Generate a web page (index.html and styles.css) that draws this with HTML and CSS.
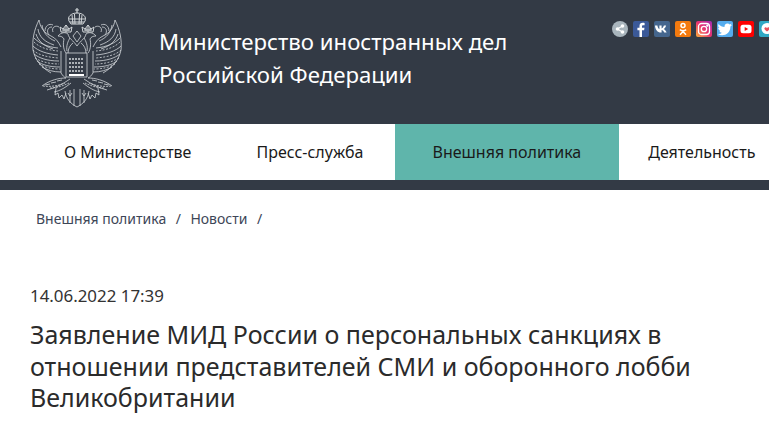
FILE: index.html
```html
<!DOCTYPE html>
<html lang="ru">
<head>
    <meta charset="UTF-8">
    <title>Заявление МИД России</title>
    <link rel="stylesheet" href="styles.css">
</head>
<body>

    <!-- Header -->
    <header class="header">
        <svg class="emblem" viewBox="0 0 104 110" fill="none" stroke="#d3d7da" stroke-width=".8">
            <defs>
                <g id="half">
                    <!-- wing -->
                    <path d="M14 15C9 25 7 35 8 45c2 10 8 17 18 23"/>
                    <path d="M14 15c1 7 5 13 12 16 5 2 8 7 10 11"/>
                    <path d="M17 20c1 8 6 13 13 16M13 24c1 8 7 13 16 16M11 29c2 7 8 12 17 15"/>
                    <path d="M9 33c5 5 13 9 24 10M8 41c5 5 14 8 25 9M9 49c5 4 13 7 25 7M12 56c5 4 13 6 23 6M17 62c5 3 11 5 19 5"/>
                    <path d="M9 37c5 5 13 8 24 9M8 45c5 5 14 7 25 8M10 53c5 3 13 6 24 6M14 59c5 3 12 5 21 5" stroke-dasharray="2 1.500"/>
                    <!-- head, neck, small crown -->
                    <path d="M52 41c-4-6-8-7-9-12-2-2-7-2-10 2 3 0 5 1 6 3-1 4-1 10 2 14"/>
                    <path d="M48 38c-3 2-5 6-5 10M45 33c-2 3-4 8-3 13M52 26l-4 5 4 6"/>
                    <path d="M36 27l-1-5 3 2 3-4 3 4 3-2-1 5zM37 25h8M41 20v7M39 23v3M43 23v3" stroke-width="1"/>
                    <path d="M28 27c-2-5 3-7 6-5M20 26c0-5 4-8 8-6M24 30c-3-4-1-8 3-8"/>
                    <!-- big crown -->
                    <path d="M52 8c-6 0-10 4-8 8l2 3h6M47 10l1 9M49.500 9l.5 10M44 14h8M45 17h7" stroke-width="1"/>
                    <!-- branches -->
                    <path d="M17 81c8-6 17-8 24-8M22 85c8-2 16-6 23-11M29 87c6-1 12-5 17-9M20 80l5-1M26 78l5-1M32 76l5-1"/>
                    <path d="M18 81c7 1 15 0 22-3M25 83c6 0 13-2 19-5" stroke-dasharray="2 1"/>
                    <!-- claws -->
                    <path d="M31 83l-1 7 3-2 1 5 3-3 2 4 2-6"/>
                    <!-- tail -->
                    <path d="M40 86c1 8 6 13 12 16M45 85v13M49 84v17M43 88l2 3 2-3"/>
                    <!-- shield feather edge -->
                    <path d="M36 46v22c2 3 3 4 5 5"/>
                </g>
            </defs>
            <use href="#half"/>
            <use href="#half" transform="translate(104 0) scale(-1 1)"/>
            <path d="M52 3v5M50 5h4" stroke-width="1.200"/>
            <path class="emblem-fill" d="M41 48h21v24H41z"/>
            <path d="M44 54h15M44 58h15M44 62h15M44 66h15" stroke-width="1.700" stroke-dasharray="2 1"/>
            <path d="M44 70h15" stroke="#fff" stroke-width="2"/>
        </svg>
        <div class="title">Министерство иностранных дел<br>Российской Федерации</div>
        <div class="socials">
            <span class="soc share">
                <svg viewBox="0 0 16 16" fill="#fff"><circle cx="5.500" cy="8" r="1.800"/><circle cx="10.500" cy="5" r="1.800"/><circle cx="10.500" cy="11" r="1.800"/><path d="M5 7.600l5.300-3 .5.800-5.300 3zM5.500 7.600l5.300 3-.5.800-5.300-3z"/></svg>
            </span>
            <span class="soc fb">
                <svg viewBox="0 0 16 16" fill="#fff"><path d="M9 16V9.200h2.100l.4-2.500H9V5.400c0-.8.300-1.200 1.200-1.200h1.400V2c-.5-.1-1.200-.2-2-.2C7.700 1.800 6.500 3 6.500 5v1.700H4.400v2.500h2.100V16z"/></svg>
            </span>
            <span class="soc vk">
                <svg viewBox="0 0 16 16" fill="#fff"><path d="M1 4.500h2.400c.1 1.700 1.300 3.600 2 3.700V4.500h2.200v2.900c.9-.1 1.800-1.500 2.300-2.900h2.200c-.4 1.700-1.500 3-2.300 3.600.8.500 2.100 1.700 2.800 3.500h-2.400c-.5-1.300-1.600-2.400-2.600-2.500v2.500h-.6C3.500 11.600 1.200 8.600 1 4.500z"/></svg>
            </span>
            <span class="soc ok">
                <svg viewBox="0 0 16 16" fill="none" stroke="#fff" stroke-width="1.500"><circle cx="8" cy="4.500" r="2"/><path d="M4.800 8.600c2 1.300 4.400 1.300 6.400 0M8 10v1M8 10.500l-3 3.200M8 10.500l3 3.200"/></svg>
            </span>
            <span class="soc ig">
                <svg viewBox="0 0 16 16" fill="none" stroke="#fff" stroke-width="1.300"><rect x="2.500" y="2.500" width="11" height="11" rx="3"/><circle cx="8" cy="8" r="2.700"/><circle cx="11.300" cy="4.700" r=".5" fill="#fff"/></svg>
            </span>
            <span class="soc tw">
                <svg viewBox="0 0 16 16" fill="#fff"><path d="M15 3.800c-.5.200-1.100.4-1.700.5.600-.4 1.100-1 1.300-1.700-.6.400-1.200.6-1.900.8a3 3 0 0 0-5.100 2.700C5.200 6 3 4.900 1.600 3.100c-.8 1.300-.4 3.100.9 4-.5 0-.9-.1-1.300-.4 0 1.500 1 2.700 2.400 3-.4.100-.9.100-1.300 0 .4 1.200 1.500 2 2.800 2.100-1.200 1-2.800 1.400-4.400 1.200 5.500 3.400 13-.2 12.700-7.600.7-.4 1.200-1 1.600-1.600z"/></svg>
            </span>
            <span class="soc yt">
                <svg viewBox="0 0 16 16"><rect x="2.500" y="3.800" width="11" height="8.400" rx="2.500" fill="#fff"/><path d="M6.700 6l3.500 2-3.500 2z" fill="#f00"/></svg>
            </span>
            <span class="soc ln">
                <svg viewBox="0 0 16 16"><circle cx="8" cy="7.500" r="5.500" fill="#fff"/><path d="M5.500 7c1-1.500 2-.5 2.500.3.500-.8 1.500-1.800 2.500-.3.500 1-1 2.500-2.500 3.500C6.500 9.500 5 8 5.500 7z" fill="#e8505b"/></svg>
            </span>
        </div>
    </header>

    <!-- Menu -->
    <nav class="menu">
        <a class="menu-item first">О Министерстве</a>
        <a class="menu-item">Пресс-служба</a>
        <a class="menu-item active">Внешняя политика</a>
        <a class="menu-item last">Деятельность</a>
    </nav>

    <!-- Breadcrumbs -->
    <div class="crumbs">
        <span>Внешняя политика</span><i>/</i><span>Новости</span><i>/</i>
    </div>

    <!-- Article -->
    <main class="article">
        <div class="date">14.06.2022 17:39</div>
        <h1>Заявление МИД России о персональных санкциях в отношении представителей СМИ и оборонного лобби Великобритании</h1>
    </main>

</body>
</html>
```

FILE: styles.css
```css
body {
    margin: 0;
    width: 769px;
    height: 427px;
    overflow: hidden;
    background: white;
    font-family: "Noto Sans", sans-serif;
}
.header {
    display: flex;
    height: 124px;
    background: #333a45;
    overflow: hidden;
}
.emblem {
    flex: none;
    width: 104px;
    height: 110px;
    margin: 5px 0 0 25px;
}
.emblem-fill {
    fill: #333a45;
}
.title {
    flex: none;
    width: 420px;
    margin: 25px 0 0 30px;
    color: white;
    font-size: 22.2px;
    line-height: 33px;
}
.socials {
    display: flex;
    flex: none;
    gap: 5px;
    margin: 21px 0 0 33px;
}
.soc {
    flex: none;
    width: 16px;
    height: 16px;
    border-radius: 2px;
}
.soc svg {
    display: block;
}
.share { background: #a9b5bd; border-radius: 50%; }
.fb { background: #3b5998; }
.vk { background: #45668e; }
.ok { background: #f47a0e; }
.ig { background: linear-gradient(45deg, #fbb03b, #e8326f 50%, #a22bb5); }
.tw { background: #55acee; }
.yt { background: #f00; }
.ln { background: #31a8c4; }
.menu {
    display: flex;
    height: 56px;
    padding-left: 33px;
    background: white;
    border-bottom: 10px solid #333a45;
}
.menu-item {
    flex: none;
    padding: 0 31px;
    color: #1a1a1a;
    font-size: 16px;
    line-height: 56px;
}
.menu-item.first {
    padding-right: 34px;
}
.menu-item.active {
    padding: 0 38px;
    background: #5fb5ab;
}
.menu-item.last {
    padding-left: 29px;
}
.crumbs {
    margin: 20px 0 0 36px;
    color: #3d4657;
    font-size: 14px;
    line-height: 18px;
}
.crumbs i {
    margin: 0 9.5px;
    font-style: normal;
}
.article {
    padding: 0 30px;
}
.date {
    margin-top: 58px;
    color: #333;
    font-size: 16.9px;
    line-height: 20px;
}
h1 {
    margin: 13px 0 0;
    color: #2b2b2b;
    font-size: 25px;
    font-weight: normal;
    line-height: 31.5px;
}
```
